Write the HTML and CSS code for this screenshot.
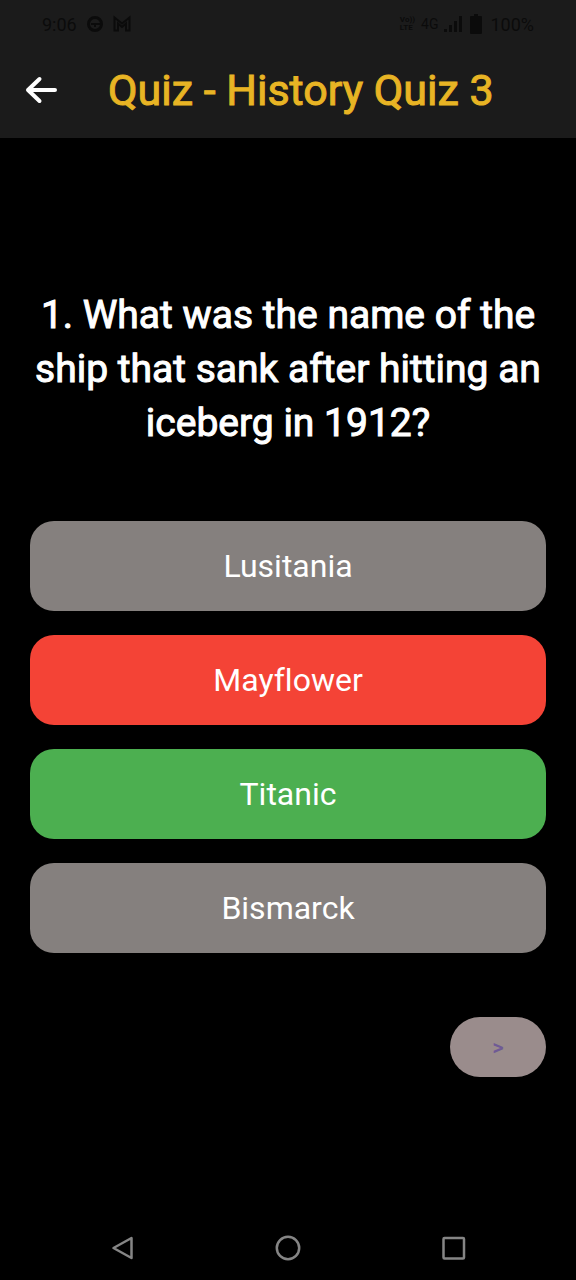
FILE: index.html
```html
<!DOCTYPE html>
<html lang="en">
<head>
<meta charset="utf-8">
<meta name="viewport" content="width=device-width, initial-scale=1">
<title>Quiz - History Quiz 3</title>
<link rel="stylesheet" href="styles.css">
</head>
<body>
<div class="screen">
  <header class="top">
    <div class="status">
      <span class="clock">9:06</span>
      <svg class="status-icon" width="18" height="18" viewBox="0 0 18 18" fill="none" stroke="currentColor" stroke-width="3" aria-hidden="true"><circle cx="9" cy="9" r="6.5"/><path d="M5 9h9M9 9v3" stroke-width="2"/></svg>
      <svg class="status-icon" width="18" height="18" viewBox="0 0 18 18" fill="none" stroke="currentColor" stroke-width="2" aria-hidden="true"><path d="M1.500 15.500v-13l7.500 6 7.500-6v13h-3.500v-7l-4 3.500-4-3.500v7z"/></svg>
      <span class="volte"><span>Vo))</span><span>LTE</span></span>
      <span class="network">4G</span>
      <svg class="signal" width="18" height="18" viewBox="0 0 18 18" fill="currentColor" aria-hidden="true"><path d="M0 14h3v3H0zM5 10h3v7H5zM10 6h3v11h-3zM15 1h3v16h-3z"/></svg>
      <svg class="battery" width="12" height="20" viewBox="0 0 12 20" fill="currentColor" aria-hidden="true"><path d="M4 0h4v2h3a1 1 0 0 1 1 1v16a1 1 0 0 1-1 1H1a1 1 0 0 1-1-1V3a1 1 0 0 1 1-1h3z"/></svg>
      <span class="charge">100%</span>
    </div>
    <div class="app-bar">
      <button class="back" type="button" aria-label="Back">
        <svg width="34" height="30" viewBox="0 0 34 30" fill="none" stroke="currentColor" stroke-width="4" stroke-linecap="round" stroke-linejoin="round" aria-hidden="true"><path d="M31 15H4M15.500 4 4 15l11.500 11"/></svg>
      </button>
      <h1 class="title">Quiz - History Quiz 3</h1>
    </div>
  </header>

  <main class="quiz">
    <h2 class="question">1. What was the name of the ship that sank after hitting an iceberg in 1912?</h2>
    <div class="answers">
      <button class="answer" type="button">Lusitania</button>
      <button class="answer wrong" type="button">Mayflower</button>
      <button class="answer correct" type="button">Titanic</button>
      <button class="answer" type="button">Bismarck</button>
    </div>
    <button class="next" type="button">&gt;</button>
  </main>

  <nav class="system-nav">
    <button type="button" aria-label="Back"><svg width="28" height="28" viewBox="0 0 28 28" aria-hidden="true"><path d="M22.500 4v20L4.500 14z"/></svg></button>
    <button type="button" aria-label="Home"><svg width="28" height="28" viewBox="0 0 28 28" aria-hidden="true"><circle cx="14" cy="14" r="11.200"/></svg></button>
    <button type="button" aria-label="Recent apps"><svg width="28" height="28" viewBox="0 0 28 28" aria-hidden="true"><rect x="4.500" y="4" width="20.500" height="20.500" rx="1"/></svg></button>
  </nav>
</div>
</body>
</html>
```
FILE: styles.css
```css
* {
  box-sizing: border-box;
}

body {
  margin: 0;
  background: #000;
  color: #fff;
  font-family: Roboto, "Liberation Sans", sans-serif;
  font-variant-ligatures: none;
}

button {
  border: 0;
  padding: 0;
  background: none;
  color: inherit;
  font: inherit;
  font-variant-ligatures: none;
}

svg {
  display: block;
}

.screen {
  display: flex;
  flex-direction: column;
  min-height: 100vh;
}

.top {
  background: #1b1b1b;
}

.status {
  display: flex;
  align-items: center;
  height: 48px;
  padding: 0 42px;
  color: #0b0b0b;
  font-size: 18px;
}

.status-icon {
  margin-left: 9px;
}

.volte {
  display: flex;
  flex-direction: column;
  margin-left: auto;
  font-size: 8px;
  font-weight: 700;
  line-height: 8px;
}

.network {
  margin-left: 6px;
  font-size: 14px;
}

.signal {
  margin-left: 6px;
}

.battery {
  margin: 0 8px;
}

.app-bar {
  display: flex;
  align-items: center;
  gap: 50px;
  height: 90px;
  padding: 0 24px 6px;
}

.title,
.question {
  margin: 0;
  font-weight: 400;
  -webkit-text-stroke: 1px currentColor;
}

.title {
  color: #e8b424;
  font-size: 43px;
  line-height: 50px;
}

.quiz {
  display: flex;
  flex: 1;
  flex-direction: column;
  padding: 150px 30px 32px;
}

.question {
  font-size: 39px;
  line-height: 54px;
  text-align: center;
}

.answers {
  display: flex;
  flex-direction: column;
  gap: 24px;
  margin-top: 71px;
}

.answer {
  height: 90px;
  border-radius: 24px;
  background: #85807e;
  font-size: 32px;
}

.wrong {
  background: #f44336;
}

.correct {
  background: #4caf50;
}

.next {
  align-self: flex-end;
  width: 96px;
  height: 60px;
  margin-top: 64px;
  border-radius: 30px;
  background: #9a8c8c;
  color: #6f5a95;
  font-size: 22px;
  font-weight: 500;
}

.system-nav {
  display: flex;
  justify-content: space-around;
  padding: 18px 40px;
}

.system-nav svg {
  fill: none;
  stroke: #858585;
  stroke-width: 2.500;
  stroke-linejoin: round;
}
```
